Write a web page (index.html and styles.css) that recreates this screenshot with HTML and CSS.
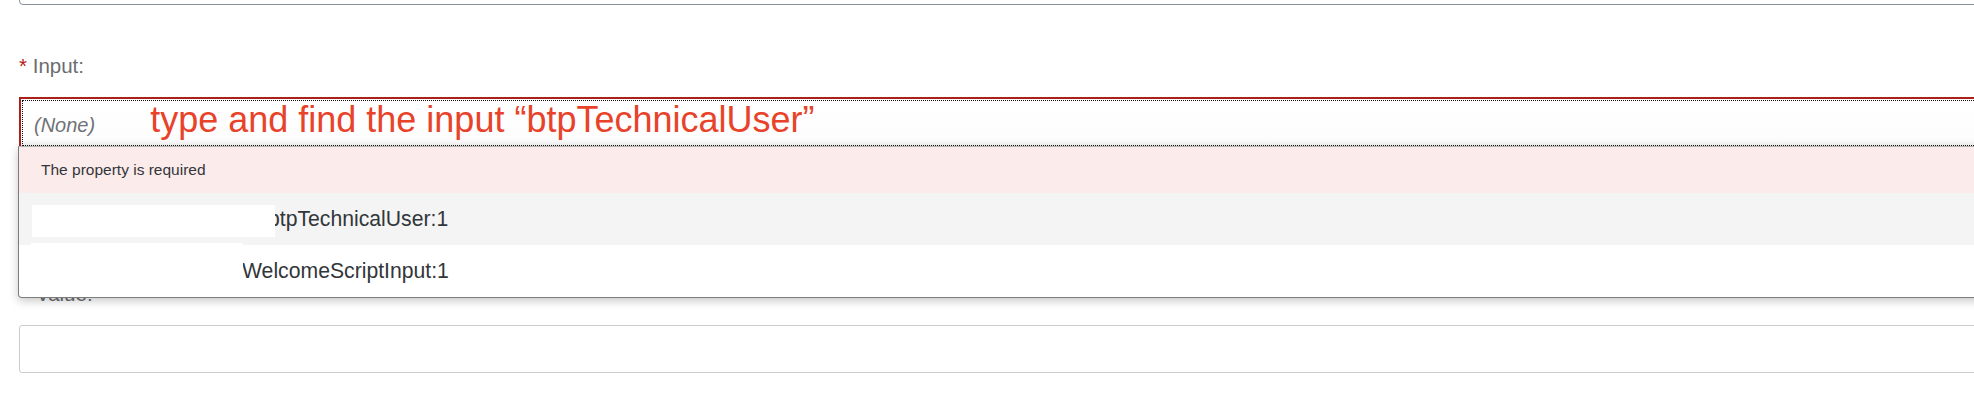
FILE: index.html
```html
<!DOCTYPE html>
<html>
<head>
<meta charset="utf-8">
<link rel="stylesheet" href="styles.css">
</head>
<body>
<div class="page">
  <div class="field field-top"></div>

  <div class="label"><span class="req">*</span> Input:</div>
  <div class="combo">
    <div class="combo-input">
      <span class="placeholder">(None)</span>
      <span class="note">type and find the input “btpTechnicalUser”</span>
    </div>
    <div class="popover">
      <div class="msg">The property is required</div>
      <div class="item item-hover">
        <span class="redact redact-1"></span>
        <span class="item-text text-1">btpTechnicalUser:1</span>
      </div>
      <div class="item">
        <span class="redact redact-2"></span>
        <span class="item-text text-2">WelcomeScriptInput:1</span>
      </div>
    </div>
  </div>

  <div class="label label-value">Value:</div>
  <div class="field field-value"></div>
</div>
</body>
</html>
```

FILE: styles.css
```css
html, body {
  margin: 0;
  padding: 0;
  background: #ffffff;
  overflow: hidden;
}

body {
  width: 1974px;
  height: 408px;
  font-family: "Liberation Sans", Arial, sans-serif;
}

.page {
  padding-left: 19px;
  width: 2300px;
}

.field {
  box-sizing: border-box;
  background: #ffffff;
  border-radius: 4px;
}

.field-top {
  margin-top: -40px;
  height: 45px;
  border: 1px solid #8a9097;
}

.label {
  margin-top: 49px;
  font-size: 20.5px;
  line-height: 24px;
  color: #6a6d70;
  height: 24px;
}

.req {
  color: #b3201c;
}

.combo {
  position: relative;
  margin-top: 19px;
}

.combo-input {
  box-sizing: border-box;
  height: 52px;
  border: 2px solid #a92219;
  background: linear-gradient(to bottom, #ffffff 0%, #fdfdfd 80%, #f3f3f3 100%);
  outline: 1px dotted #111111;
  outline-offset: -4px;
  display: flex;
  align-items: baseline;
  padding: 3px 0 0 13px;
}

.placeholder {
  font-style: italic;
  font-size: 20px;
  line-height: 24px;
  color: #6f7276;
}

.note {
  margin-left: 55px;
  font-size: 36px;
  line-height: 36px;
  color: #e8432a;
}

.popover {
  position: absolute;
  left: -1px;
  top: 49px;
  width: 2200px;
  background: #ffffff;
  border: 1px solid #7a7d80;
  border-top-color: #b3b3b3;
  border-radius: 0 0 4px 4px;
  box-shadow: 0 3px 10px rgba(0, 0, 0, 0.22);
  z-index: 2;
}

.msg {
  height: 46px;
  background: #fcebeb;
  display: flex;
  align-items: center;
  padding-left: 22px;
  font-size: 15.5px;
  color: #32363a;
}

.item {
  position: relative;
  height: 52px;
  display: flex;
  align-items: center;
  font-size: 21.2px;
  color: #32363a;
}

.item-hover {
  background: #f4f4f4;
}

.item-text {
  position: relative;
}

.text-1 {
  margin-left: 249px;
}

.text-2 {
  margin-left: 223px;
}

.redact {
  position: absolute;
  background: #ffffff;
  z-index: 1;
}

.redact-1 {
  left: 13px;
  top: 12px;
  width: 243px;
  height: 32px;
}

.redact-2 {
  left: 12px;
  top: -2px;
  width: 212px;
  height: 32px;
}

.label-value {
  margin-top: 133px;
  padding-left: 17px;
}

.field-value {
  margin-top: 19px;
  height: 48px;
  border: 1px solid #cccccc;
  border-radius: 3px;
}
```
